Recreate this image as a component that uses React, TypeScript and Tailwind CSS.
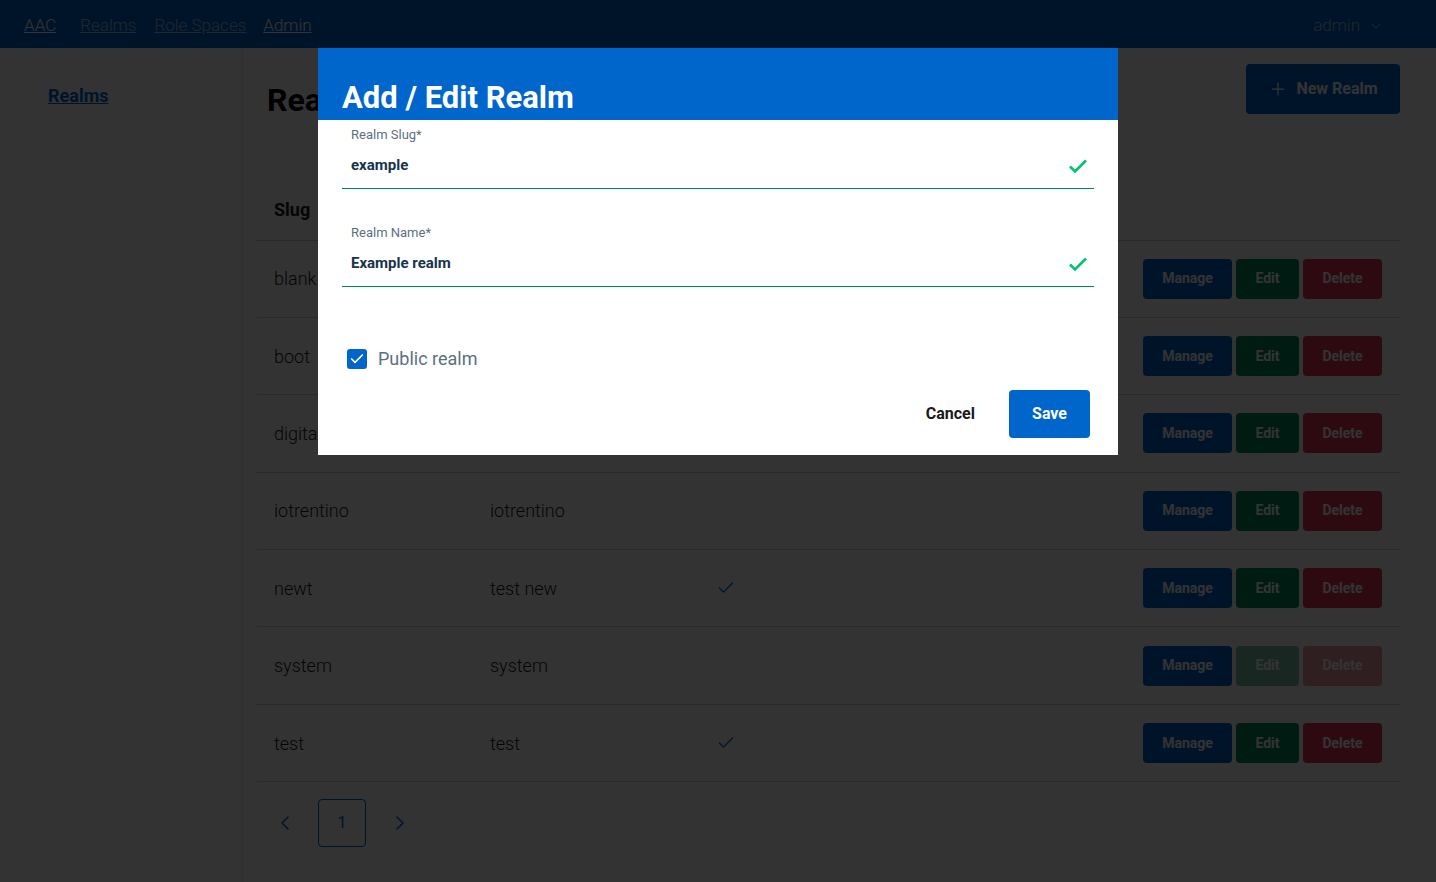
import { Check, ChevronDown, ChevronLeft, ChevronRight, Plus } from 'lucide-react';

type Realm = { slug: string; name: string; isPublic: boolean; locked?: boolean };

const realms: Realm[] = [
  { slug: 'blank', name: 'blank', isPublic: false },
  { slug: 'boot', name: 'boot', isPublic: false },
  { slug: 'digitalhub', name: 'digitalhub', isPublic: false },
  { slug: 'iotrentino', name: 'iotrentino', isPublic: false },
  { slug: 'newt', name: 'test new', isPublic: true },
  { slug: 'system', name: 'system', isPublic: false, locked: true },
  { slug: 'test', name: 'test', isPublic: true },
];

function ValidIcon() {
  return (
    <svg width="20" height="16" viewBox="0 0 20 16" fill="none">
      <path d="M2 8.5l5 5L18 2.5" stroke="#00c46e" strokeWidth="2.6" />
    </svg>
  );
}

function Field({ label, value }: { label: string; value: string }) {
  return (
    <div className="border-b border-[#008758]">
      <div className="px-[9px] text-[13px] leading-[16px] text-[#5c6f82]">{label}</div>
      <div className="flex h-[45px] items-center justify-between pl-[9px] pr-[6px]">
        <span className="text-[15px] font-bold text-[#17324d]">{value}</span>
        <ValidIcon />
      </div>
    </div>
  );
}

export default function App() {
  return (
    <div className="relative min-h-screen font-['Roboto',sans-serif] text-[#191919]">
      {/* Navbar */}
      <header className="flex h-12 items-center justify-between bg-[#0066cc] pl-6 pr-[52px] pt-[3px] text-[17px] font-light text-white">
        <nav className="flex items-center">
          <a className="underline">AAC</a>
          <a className="ml-[24px] text-white/60 underline">Realms</a>
          <a className="ml-[18px] text-white/60 underline">Role Spaces</a>
          <a className="ml-[17px] underline">Admin</a>
        </nav>
        <div className="flex items-center gap-2 text-white/60">
          <span>admin</span>
          <ChevronDown className="h-4 w-4" strokeWidth={1.5} />
        </div>
      </header>

      <div className="flex min-h-[834px]">
        {/* Sidebar */}
        <aside className="w-[243px] shrink-0 border-r border-[#e6e9f2] pl-12 pt-[34px]">
          <a className="text-[18px] font-bold text-[#0066cc] underline">Realms</a>
        </aside>

        {/* Main */}
        <main className="flex-1 pl-[14px] pr-9 pt-4">
          <div className="flex items-start justify-between">
            <h1 className="mt-[12px] pl-[10px] text-[32px] font-bold text-black">Realms</h1>
            <button className="flex h-[50px] w-[154px] items-center justify-center gap-2 rounded bg-[#0066cc] text-[16px] font-bold text-white">
              <Plus className="h-5 w-5" strokeWidth={1.5} />
              New Realm
            </button>
          </div>

          <table className="mt-[56px] w-full border-collapse">
            <thead>
              <tr className="border-b border-[#cccccc]">
                <th className="h-[60px] w-[216px] pl-[17px] text-left text-[18px] font-bold">Slug</th>
                <th className="w-[216px] pl-[17px] text-left text-[18px] font-bold">Name</th>
                <th className="pl-[17px] text-left text-[18px] font-bold">Public</th>
                <th />
              </tr>
            </thead>
            <tbody>
              {realms.map((r) => (
                <tr key={r.slug} className="border-b border-[#cccccc]">
                  <td className="h-[77.4px] pl-[17px] text-[18px] font-light">{r.slug}</td>
                  <td className="pl-[17px] text-[18px] font-light">{r.name}</td>
                  <td className="pl-[27px]">
                    {r.isPublic && <Check className="h-5 w-5 text-[#0066cc]" strokeWidth={1.5} />}
                  </td>
                  <td className="pr-[18px]">
                    <div className="flex justify-end gap-1 text-[14px] font-bold text-white">
                      <button className="h-10 w-[89px] rounded bg-[#0066cc]">Manage</button>
                      <button className={`h-10 w-[63px] rounded bg-[#008758] ${r.locked ? 'opacity-50' : ''}`}>Edit</button>
                      <button className={`h-10 w-[79px] rounded bg-[#d9364f] ${r.locked ? 'opacity-50' : ''}`}>Delete</button>
                    </div>
                  </td>
                </tr>
              ))}
            </tbody>
          </table>

          <div className="mt-[17px] flex items-center text-[#0066cc]">
            <ChevronLeft className="ml-[16px] h-6 w-6" strokeWidth={1.5} />
            <div className="ml-[21px] flex h-12 w-12 items-center justify-center rounded border border-[#0066cc] text-[16px]">1</div>
            <ChevronRight className="ml-[22px] h-6 w-6" strokeWidth={1.5} />
          </div>
        </main>
      </div>

      {/* Modal */}
      <div className="fixed inset-0 flex justify-center bg-black/80 pt-12">
        <div className="h-fit w-[800px] bg-white">
          <div className="flex h-[72px] items-end bg-[#0066cc] px-6 pb-[2px]">
            <h2 className="text-[31px] font-bold leading-[40px] text-white">Add / Edit Realm</h2>
          </div>
          <div className="px-6 pt-[7px]">
            <Field label="Realm Slug*" value="example" />
            <div className="mt-[36px]">
              <Field label="Realm Name*" value="Example realm" />
            </div>
            <label className="mt-[58px] flex items-center gap-[11px] pl-[5px]">
              <span className="flex h-5 w-5 items-center justify-center rounded-[3px] bg-[#0066cc]">
                <Check className="h-4 w-4 text-white" strokeWidth={2.5} />
              </span>
              <span className="text-[18px] text-[#5c6f82]">Public realm</span>
            </label>
            <div className="mt-[18px] flex items-center justify-end gap-[10px] pb-[17px] pr-1">
              <button className="h-12 px-6 text-[16px] font-bold text-[#191919]">Cancel</button>
              <button className="h-12 w-[81px] rounded bg-[#0066cc] text-[16px] font-bold text-white">Save</button>
            </div>
          </div>
        </div>
      </div>
    </div>
  );
}
